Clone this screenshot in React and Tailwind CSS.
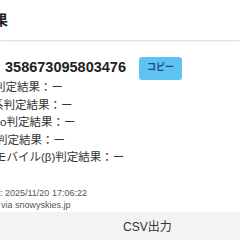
export default function App() {
  const font = { fontFamily: '"Liberation Sans", "Noto Sans CJK JP", sans-serif' };
  return (
    <div className="w-[240px] h-[240px] overflow-hidden bg-white text-[#333]" style={font}>
      <div className="h-[41px] border-b border-[#e3e3e3] shadow-[0_1px_2px_rgba(0,0,0,0.05)] flex items-center">
        <div className="-ml-[48px] text-[14px] font-bold text-[#222] whitespace-nowrap">判定結果</div>
      </div>
      <div className="pt-[16px]">
        <div className="flex items-center h-[22px] whitespace-nowrap">
          <span className="ml-[5px] text-[14.5px] font-bold text-[#222]">358673095803476</span>
          <button className="ml-[13px] h-[23px] w-[43px] rounded-[3px] bg-[#5ec2f2] text-[#1d4f86] text-[9px] font-bold flex items-center justify-center">コピー</button>
        </div>
        <div className="text-[11.5px] leading-[17.5px] whitespace-nowrap">
          <div className="-ml-[6px]">判定結果：ー</div>
          <div className="-ml-[8px]">系判定結果：ー</div>
          <div className="ml-[0px]">o判定結果：ー</div>
          <div className="-ml-[4px]">判定結果：ー</div>
          <div className="-ml-[5px]">モバイル(β)判定結果：ー</div>
        </div>
        <div className="mt-[20.5px] text-[9px] leading-[12px] text-[#555] whitespace-nowrap">
          <div>: 2025/11/20 17:06:22</div>
          <div className="ml-[1px]">via snowyskies.jp</div>
        </div>
      </div>
      <div className="mt-[1px] h-[40px] bg-[#f2f3f5] flex items-start">
        <span className="ml-[123px] mt-[6px] text-[12px] text-[#333]">CSV出力</span>
      </div>
    </div>
  );
}
